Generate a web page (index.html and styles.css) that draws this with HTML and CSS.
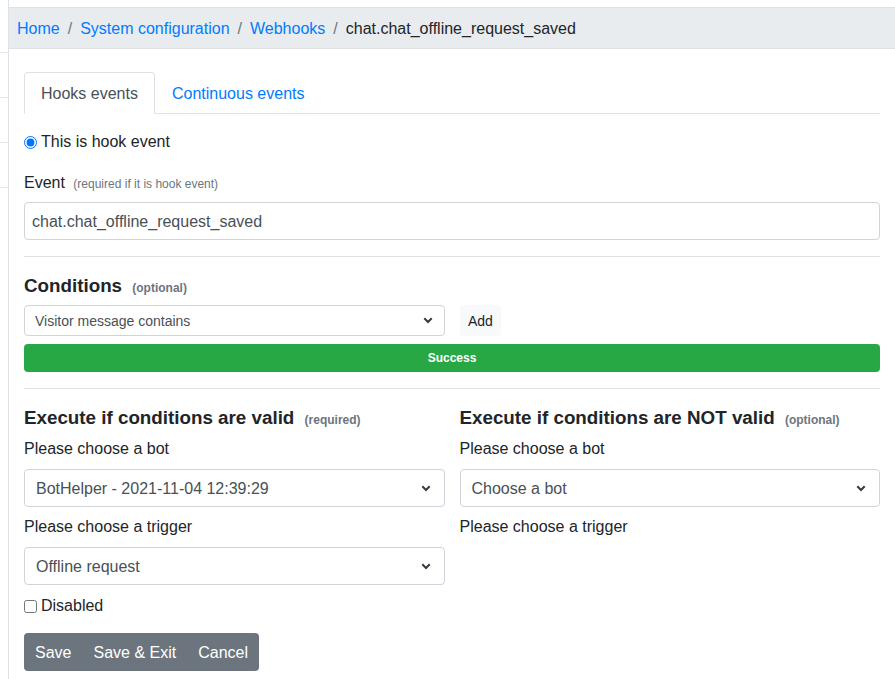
FILE: index.html
```html
<!DOCTYPE html>
<html>
<head>
<meta charset="utf-8">
<link rel="stylesheet" href="styles.css">
</head>
<body>
<div class="layout">
  <div class="side">
    <div class="side-row first"></div>
    <div class="side-row"></div>
    <div class="side-row"></div>
    <div class="side-row"></div>
  </div>
  <div class="main">
    <nav class="breadcrumb">
      <a href="#">Home</a><span class="sep">/</span><a href="#">System configuration</a><span class="sep">/</span><a href="#">Webhooks</a><span class="sep">/</span><span class="current">chat.chat_offline_request_saved</span>
    </nav>
    <div class="content">
      <div class="tabs">
        <div class="tab active">Hooks events</div>
        <div class="tab">Continuous events</div>
      </div>
      <label class="radio-line"><input type="radio" checked> This is hook event</label>
      <div class="label-line">Event <small class="hint">(required if it is hook event)</small></div>
      <div class="input">chat.chat_offline_request_saved</div>
      <hr class="rule">
      <h4 class="heading">Conditions <small class="muted">(optional)</small></h4>
      <div class="cond-row">
        <div class="select sm">
          <span>Visitor message contains</span>
          <svg width="10" height="7" viewBox="0 0 10 7"><path d="M1.3 1.3 5 5 8.7 1.3" fill="none" stroke="#343a40" stroke-width="2"/></svg>
        </div>
        <div class="add-btn">Add</div>
      </div>
      <div class="success">Success</div>
      <hr class="rule">
      <div class="cols">
        <div class="col">
          <h4 class="heading">Execute if conditions are valid <small class="muted">(required)</small></h4>
          <div class="field-label">Please choose a bot</div>
          <div class="select">
            <span>BotHelper - 2021-11-04 12:39:29</span>
            <svg width="10" height="7" viewBox="0 0 10 7"><path d="M1.3 1.3 5 5 8.7 1.3" fill="none" stroke="#343a40" stroke-width="2"/></svg>
          </div>
          <div class="field-label">Please choose a trigger</div>
          <div class="select">
            <span>Offline request</span>
            <svg width="10" height="7" viewBox="0 0 10 7"><path d="M1.3 1.3 5 5 8.7 1.3" fill="none" stroke="#343a40" stroke-width="2"/></svg>
          </div>
          <label class="check-line"><input type="checkbox"> Disabled</label>
        </div>
        <div class="col">
          <h4 class="heading">Execute if conditions are NOT valid <small class="muted">(optional)</small></h4>
          <div class="field-label">Please choose a bot</div>
          <div class="select">
            <span>Choose a bot</span>
            <svg width="10" height="7" viewBox="0 0 10 7"><path d="M1.3 1.3 5 5 8.7 1.3" fill="none" stroke="#343a40" stroke-width="2"/></svg>
          </div>
          <div class="field-label">Please choose a trigger</div>
        </div>
      </div>
      <div class="btn-group">
        <span class="btn">Save</span><span class="btn">Save &amp; Exit</span><span class="btn">Cancel</span>
      </div>
    </div>
  </div>
</div>
</body>
</html>
```
FILE: styles.css
```css
* { box-sizing: border-box; }
html, body { margin: 0; padding: 0; background: #fff; }
body {
  font-family: "Liberation Sans", "Noto Sans", sans-serif;
  font-size: 16px;
  line-height: 24px;
  color: #212529;
  overflow: hidden;
}
.layout { display: flex; min-height: 679px; }
.side { width: 9px; border-right: 1px solid #dee2e6; flex: none; }
.side-row { height: 45px; border-bottom: 1px solid #e5e7ea; }
.side-row.first { height: 53px; }
.main { flex: 1; padding-top: 7px; min-width: 0; }
.breadcrumb {
  background: #e9ecef;
  border-top: 1px solid #dee2e6;
  border-bottom: 1px solid #dee2e6;
  padding: 9px 8px 7px;
  white-space: nowrap;
}
.breadcrumb a { color: #007bff; text-decoration: none; }
.breadcrumb .sep { color: #6c757d; padding: 0 8px; }
.content { padding: 23px 15px 0 15px; }
.tabs { display: flex; border-bottom: 1px solid #dee2e6; }
.tab {
  padding: 9px 16px 7px;
  border: 1px solid transparent;
  border-radius: 4px 4px 0 0;
  margin-bottom: -1px;
  color: #007bff;
}
.tab.active { color: #495057; border-color: #dee2e6 #dee2e6 #fff; background: #fff; }
.radio-line { display: flex; align-items: center; margin-top: 16px; height: 24px; }
.radio-line input { margin: 0 4px 0 0; width: 13px; height: 13px; }
.label-line { margin-top: 17px; margin-bottom: 7px; height: 24px; }
.hint { font-size: 12px; line-height: 1; color: #6c757d; margin-left: 4px; }
.input {
  height: 38px;
  border: 1px solid #ced4da;
  border-radius: 4px;
  padding: 7px 7px 5px;
  color: #495057;
}
.rule { border: 0; border-top: 1px solid #dee2e6; margin: 16px 0 17px; }
.heading {
  margin: 0;
  font-size: 18.8px;
  line-height: 24px;
  height: 24px;
  font-weight: 700;
}
.muted { font-size: 12px; line-height: 1; font-weight: 700; color: #6c757d; margin-left: 5px; }
.cond-row { display: flex; gap: 15px; margin-top: 7px; }
.select {
  height: 38px;
  border: 1px solid #ced4da;
  border-radius: 4px;
  padding: 2px 13px 0 11px;
  display: flex;
  align-items: center;
  justify-content: space-between;
  color: #495057;
}
.select svg { margin-top: -2px; }
.select.sm { height: 31px; font-size: 14px; padding: 1px 11px 0 10px; width: 421px; }
.select.sm svg { margin-top: -1px; }
.add-btn {
  height: 31px;
  background: #f8f9fa;
  border-radius: 4px;
  font-size: 14px;
  padding: 1px 8px 0;
  display: flex;
  align-items: center;
}
.success {
  margin-top: 8px;
  height: 28px;
  background: #28a745;
  color: #fff;
  border-radius: 4px;
  font-size: 12px;
  font-weight: 700;
  text-align: center;
  line-height: 29px;
}
.cols { display: flex; gap: 15px; }
.col { flex: 1; min-width: 0; }
.field-label { margin-top: 7px; margin-bottom: 8px; padding-top: 1px; height: 24px; box-sizing: content-box; margin-top: 6px; }
.col .select + .field-label { margin-top: 7px; }
.check-line { display: flex; align-items: center; margin-top: 8px; height: 24px; padding-top: 1px; box-sizing: content-box; margin-bottom: -1px; }
.check-line input { margin: 0 4px 0 0; width: 13px; height: 13px; }
.btn-group {
  display: inline-flex;
  margin-top: 16px;
  background: #6c757d;
  border-radius: 4px;
  color: #fff;
}
.btn { padding: 8px 11px 6px; }
```
